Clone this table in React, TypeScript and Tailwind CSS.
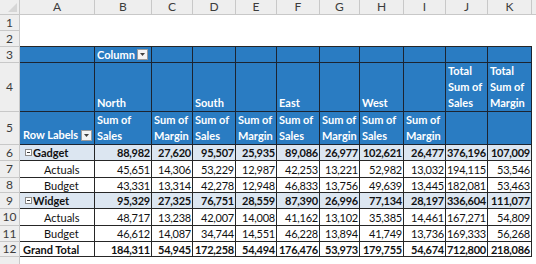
import React from "react";

type Row = {
  label: string;
  kind: "group" | "item" | "total";
  values: string[];
};

// 피벗 데이터 (North, South, East, West, Total) x (Sales, Margin)
const rows: Row[] = [
  {label: "Gadget", kind: "group", values: ["88,982", "27,620", "95,507", "25,935", "89,086", "26,977", "102,621", "26,477", "376,196", "107,009"]},
  {label: "Actuals", kind: "item", values: ["45,651", "14,306", "53,229", "12,987", "42,253", "13,221", "52,982", "13,032", "194,115", "53,546"]},
  {label: "Budget", kind: "item", values: ["43,331", "13,314", "42,278", "12,948", "46,833", "13,756", "49,639", "13,445", "182,081", "53,463"]},
  {label: "Widget", kind: "group", values: ["95,329", "27,325", "76,751", "28,559", "87,390", "26,996", "77,134", "28,197", "336,604", "111,077"]},
  {label: "Actuals", kind: "item", values: ["48,717", "13,238", "42,007", "14,008", "41,162", "13,102", "35,385", "14,461", "167,271", "54,809"]},
  {label: "Budget", kind: "item", values: ["46,612", "14,087", "34,744", "14,551", "46,228", "13,894", "41,749", "13,736", "169,333", "56,268"]},
  {label: "Grand Total", kind: "total", values: ["184,311", "54,945", "172,258", "54,494", "176,476", "53,973", "179,755", "54,674", "712,800", "218,086"]},
];

const letters = ["A", "B", "C", "D", "E", "F", "G", "H", "I", "J", "K"];
const regions = ["North", "", "South", "", "East", "", "West", ""];

const rowHead = "flex items-center justify-center bg-[#eeeeee] border-r border-b border-[#c8c8c8] text-[12px] text-[#3c3c3c]";
const blue = "bg-[#2a7cc2] border-r border-b border-[#1c2430] text-white font-bold text-[11px] leading-[16px]";
const cell = "border-r border-b border-[#262626] text-[11px] leading-[15px] flex items-center whitespace-nowrap text-[#111]";

function DropButton() {
  return (
    <span className="w-[11px] h-[11px] bg-[#f4f4f4] border border-[#9a9a9a] flex items-center justify-center shrink-0">
      <svg width="5" height="3" viewBox="0 0 5 3">
        <polygon points="0,0 5,0 2.5,3" fill="#404040" />
      </svg>
    </span>
  );
}

function Collapse() {
  return (
    <span className="w-[7px] h-[7px] border border-[#8a8a8a] bg-white flex items-center justify-center shrink-0 mr-[1px]">
      <span className="w-[3px] h-px bg-[#404040]" />
    </span>
  );
}

export default function App() {
  return (
    <div
      className="w-[536px] h-[264px] overflow-hidden bg-white grid grid-cols-[20px_75px_57px_41px_43px_41px_43px_40px_44px_42px_42px_44px_1fr] grid-rows-[15px_16px_16px_16px_49px_33px_16px_17px_15px_16px_17px_16px_15px_1fr]"
      style={{fontFamily: "Lato, 'Liberation Sans', sans-serif"}}
    >
      {/* 열 머리글 */}
      <div className="bg-[#eeeeee] border-r border-b border-[#c8c8c8] flex items-end justify-end p-[2px]">
        <svg width="9" height="9" viewBox="0 0 9 9">
          <polygon points="9,0 9,9 0,9" fill="#d6d6d6" />
        </svg>
      </div>
      {letters.map((l) => (
        <div key={l} className={rowHead}>
          {l}
        </div>
      ))}
      <div className="bg-[#eeeeee] border-b border-[#c8c8c8]" />

      {/* 1, 2행 */}
      <div className={rowHead}>1</div>
      {letters.map((l) => (
        <div key={"r1" + l} />
      ))}
      <div />
      <div className={rowHead}>2</div>
      {letters.map((l) => (
        <div key={"r2" + l} className="border-b border-[#262626]" />
      ))}
      <div />

      {/* 3행 */}
      <div className={rowHead}>3</div>
      <div className={blue} />
      <div className={`${blue} flex items-center gap-[2px] pl-[2px]`}>
        <span>Column</span>
        <DropButton />
      </div>
      {letters.slice(2).map((l) => (
        <div key={"r3" + l} className={blue} />
      ))}
      <div />

      {/* 4행 */}
      <div className={rowHead}>4</div>
      <div className={blue} />
      {regions.map((r, i) => (
        <div key={"r4" + i} className={`${blue} flex items-end pl-[2px]`}>
          {r}
        </div>
      ))}
      <div className={`${blue} flex items-end pl-[2px]`}>
        <span>
          Total
          <br />
          Sum of
          <br />
          Sales
        </span>
      </div>
      <div className={`${blue} flex items-end pl-[2px]`}>
        <span>
          Total
          <br />
          Sum of
          <br />
          Margin
        </span>
      </div>
      <div />

      {/* 5행 */}
      <div className={rowHead}>5</div>
      <div className={`${blue} flex items-end gap-[3px] pl-[3px] pb-[1px]`}>
        <span>Row Labels</span>
        <span className="mb-[2px]">
          <DropButton />
        </span>
      </div>
      {regions.map((_, i) => (
        <div key={"r5" + i} className={`${blue} flex items-end pl-[2px]`}>
          <span>
            Sum of
            <br />
            {i % 2 === 0 ? "Sales" : "Margin"}
          </span>
        </div>
      ))}
      <div className={blue} />
      <div className={blue} />
      <div />

      {/* 데이터 행 */}
      {rows.map((row, idx) => {
        const bg = row.kind === "group" ? "bg-[#dce6f1]" : "bg-white";
        const weight = row.kind === "item" ? "font-normal" : "font-bold";
        return (
          <React.Fragment key={idx}>
            <div className={rowHead}>{idx + 6}</div>
            <div
              className={`${cell} ${bg} ${weight} ${
                row.kind === "item" ? "pl-[24px]" : row.kind === "group" ? "pl-[5px]" : "pl-[3px]"
              }`}
            >
              {row.kind === "group" && <Collapse />}
              <span>{row.label}</span>
            </div>
            {row.values.map((v, j) => (
              <div key={j} className={`${cell} ${bg} ${weight} justify-end pr-[1px] tracking-[-0.25px]`}>
                {v}
              </div>
            ))}
            <div />
          </React.Fragment>
        );
      })}

      {/* 13행 */}
      <div className="bg-[#eeeeee] border-r border-[#c8c8c8]" />
    </div>
  );
}
